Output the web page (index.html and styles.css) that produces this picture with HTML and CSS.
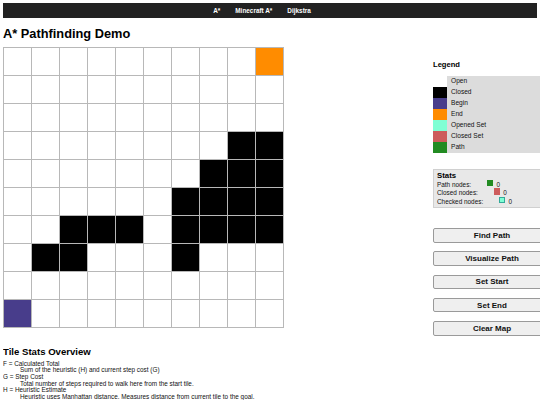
FILE: index.html
```html
<!DOCTYPE html>
<html>
<head>
<meta charset="utf-8">
<title>A* Pathfinding Demo</title>
<link rel="stylesheet" href="styles.css">
</head>
<body>
<nav class="topnav">
  <a class="nav-link">A*</a>
  <a class="nav-link">Minecraft A*</a>
  <a class="nav-link">Dijkstra</a>
</nav>
<h1 class="title">A* Pathfinding Demo</h1>
<div class="main">
  <div class="board">
    <div class="cell"></div><div class="cell"></div><div class="cell"></div><div class="cell"></div><div class="cell"></div><div class="cell"></div><div class="cell"></div><div class="cell"></div><div class="cell"></div><div class="cell end"></div>
    <div class="cell"></div><div class="cell"></div><div class="cell"></div><div class="cell"></div><div class="cell"></div><div class="cell"></div><div class="cell"></div><div class="cell"></div><div class="cell"></div><div class="cell"></div>
    <div class="cell"></div><div class="cell"></div><div class="cell"></div><div class="cell"></div><div class="cell"></div><div class="cell"></div><div class="cell"></div><div class="cell"></div><div class="cell"></div><div class="cell"></div>
    <div class="cell"></div><div class="cell"></div><div class="cell"></div><div class="cell"></div><div class="cell"></div><div class="cell"></div><div class="cell"></div><div class="cell"></div><div class="cell wall"></div><div class="cell wall"></div>
    <div class="cell"></div><div class="cell"></div><div class="cell"></div><div class="cell"></div><div class="cell"></div><div class="cell"></div><div class="cell"></div><div class="cell wall"></div><div class="cell wall"></div><div class="cell wall"></div>
    <div class="cell"></div><div class="cell"></div><div class="cell"></div><div class="cell"></div><div class="cell"></div><div class="cell"></div><div class="cell wall"></div><div class="cell wall"></div><div class="cell wall"></div><div class="cell wall"></div>
    <div class="cell"></div><div class="cell"></div><div class="cell wall"></div><div class="cell wall"></div><div class="cell wall"></div><div class="cell"></div><div class="cell wall"></div><div class="cell wall"></div><div class="cell wall"></div><div class="cell wall"></div>
    <div class="cell"></div><div class="cell wall"></div><div class="cell wall"></div><div class="cell"></div><div class="cell"></div><div class="cell"></div><div class="cell wall"></div><div class="cell"></div><div class="cell"></div><div class="cell"></div>
    <div class="cell"></div><div class="cell"></div><div class="cell"></div><div class="cell"></div><div class="cell"></div><div class="cell"></div><div class="cell"></div><div class="cell"></div><div class="cell"></div><div class="cell"></div>
    <div class="cell begin"></div><div class="cell"></div><div class="cell"></div><div class="cell"></div><div class="cell"></div><div class="cell"></div><div class="cell"></div><div class="cell"></div><div class="cell"></div><div class="cell"></div>
  </div>
  <aside class="side">
    <h4 class="legend-title">Legend</h4>
    <div class="legend">
      <div class="sw c-open"></div><div class="lg-text">Open</div>
      <div class="sw c-closed"></div><div class="lg-text">Closed</div>
      <div class="sw c-begin"></div><div class="lg-text">Begin</div>
      <div class="sw c-end"></div><div class="lg-text">End</div>
      <div class="sw c-opened"></div><div class="lg-text">Opened Set</div>
      <div class="sw c-closedset"></div><div class="lg-text">Closed Set</div>
      <div class="sw c-path"></div><div class="lg-text">Path</div>
    </div>
    <div class="stats">
      <div class="stats-title">Stats</div>
      <div class="stat">Path nodes:<span class="chip c-path"></span>0</div>
      <div class="stat">Closed nodes:<span class="chip c-closedset"></span>0</div>
      <div class="stat">Checked nodes:<span class="chip c-opened chip-bordered"></span>0</div>
    </div>
    <div class="buttons">
      <button class="btn">Find Path</button>
      <button class="btn">Visualize Path</button>
      <button class="btn">Set Start</button>
      <button class="btn">Set End</button>
      <button class="btn">Clear Map</button>
    </div>
  </aside>
</div>
<h2 class="overview-title">Tile Stats Overview</h2>
<dl class="overview">
  <dt>F = Calculated Total</dt>
  <dd>Sum of the heuristic (H) and current step cost (G)</dd>
  <dt>G = Step Cost</dt>
  <dd>Total number of steps required to walk here from the start tile.</dd>
  <dt>H = Heuristic Estimate</dt>
  <dd>Heuristic uses Manhattan distance. Measures distance from current tile to the goal.</dd>
</dl>
</body>
</html>
```
FILE: styles.css
```css
html {
  overflow: hidden;
}
body {
  margin: 3px 0 3px 3px;
  font-family: "Liberation Sans", Arial, Helvetica, sans-serif;
  font-size: 6.4px;
  color: #000;
  background: #fff;
}
.topnav {
  height: 15px;
  margin-right: 3px;
  background: #222;
  display: flex;
  justify-content: center;
  align-items: center;
  gap: 15px;
  padding-right: 16px;
}
.nav-link {
  color: #fff;
  font-weight: bold;
  font-size: 6.4px;
  text-decoration: none;
}
.title {
  font-size: 12.8px;
  font-weight: bold;
  margin: 9px 0 5px;
  line-height: 14.7px;
}
.main {
  display: flex;
  align-items: flex-start;
}
.board {
  display: grid;
  grid-template-columns: repeat(10, 27px);
  grid-auto-rows: 27px;
  gap: 1px;
  padding: 1px;
  flex: 0 0 auto;
  margin-right: 149px;
  background: #b8b8b8;
}
.cell { background: #fff; }
.cell.wall { background: #000; }
.cell.end { background: #ff8c00; }
.cell.begin { background: #483d8b; }

.side {
  flex: 0 0 118px;
  width: 118px;
}
.legend-title {
  font-size: 7.6px;
  font-weight: bold;
  margin: 14px 0 7px;
  line-height: 8.6px;
}
.legend {
  display: grid;
  grid-template-columns: 14px 1fr;
  grid-auto-rows: 10.9px;
  background: #dcdcdc;
}
.lg-text {
  padding-left: 4px;
  font-size: 6.6px;
  line-height: 10.9px;
  color: #111;
}
.c-open { background: #fff; }
.c-closed { background: #000; }
.c-begin { background: #483d8b; }
.c-end { background: #ff8c00; }
.c-opened { background: #7fffd4; }
.c-closedset { background: #cd5c5c; }
.c-path { background: #228b22; }

.stats {
  margin-top: 16px;
  background: #e8e8e8;
  border: 1px solid #d0d0d0;
  padding: 2px 3px 3px;
  height: 32px;
}
.stats-title {
  font-weight: bold;
  font-size: 7.8px;
  line-height: 8px;
}
.stat {
  line-height: 8px;
  color: #111;
}
.chip {
  display: inline-block;
  width: 6.5px;
  height: 6.5px;
  margin: 0 3px 0 15.8px;
  box-sizing: border-box;
}
.chip-bordered { border: 0.6px solid #3a9; }

.buttons {
  margin-top: 20.5px;
  display: flex;
  flex-direction: column;
  gap: 8.8px;
}
.btn {
  height: 14.5px;
  width: 118px;
  padding: 0;
  font-family: inherit;
  font-size: 8px;
  font-weight: bold;
  color: #111;
  background: #efefef;
  border: 1px solid #9a9a9a;
  border-radius: 2px;
}
.overview-title {
  font-size: 9.6px;
  font-weight: bold;
  line-height: 11px;
  margin: 10px 0 4px;
}
.overview {
  margin: 0;
  line-height: 6.6px;
  color: #111;
}
.overview dt { margin: 0; }
.overview dd { margin: 0 0 0 17px; }
```
